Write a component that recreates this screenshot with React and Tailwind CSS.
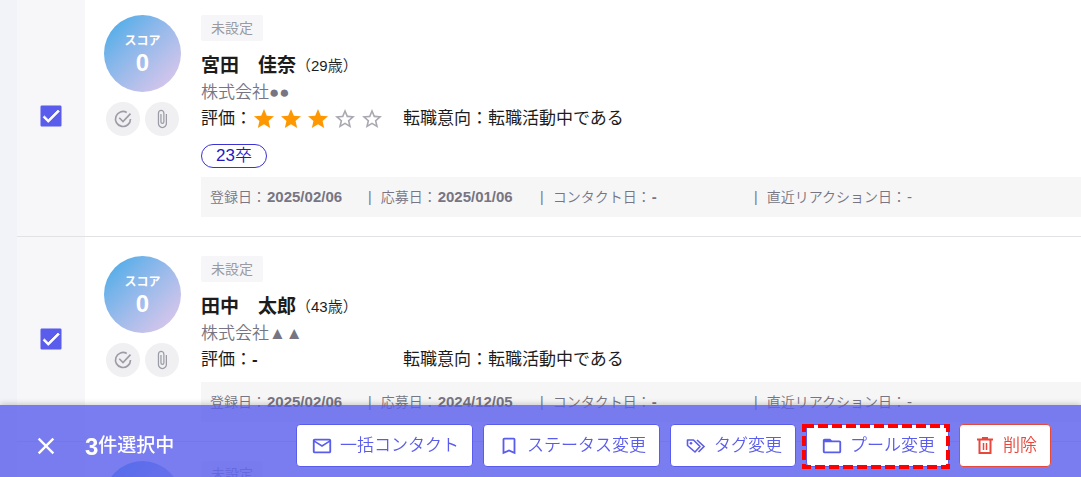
import React, { useState } from 'react';
import {
    MdCheck,
    MdClose,
    MdStar,
    MdStarBorder,
    MdMailOutline,
    MdBookmarkBorder,
    MdFolderOpen,
    MdAttachFile,
} from 'react-icons/md';

const candidates = [
    {
        id: 1,
        name: '宮田　佳奈',
        age: 29,
        company: '株式会社●●',
        rating: 3,
        intent: '転職活動中である',
        tag: '23卒',
        registered: '2025/02/06',
        applied: '2025/01/06',
    },
    {
        id: 2,
        name: '田中　太郎',
        age: 43,
        company: '株式会社▲▲',
        rating: 0,
        intent: '転職活動中である',
        registered: '2025/02/06',
        applied: '2024/12/05',
    },
    {
        id: 3,
        name: '佐藤　花子',
        age: 31,
        company: '株式会社■■',
        rating: 0,
        intent: '転職活動中である',
        registered: '2025/02/06',
        applied: '2024/12/05',
    },
];

function CheckCircleIcon() {
    return (
        <svg viewBox="0 0 24 24" className="h-5 w-5" fill="none" stroke="currentColor" strokeWidth="2">
            <path d="M16.5 4.2A9 9 0 1 0 21 12" />
            <path d="M7.5 10.500l4.500 4.500L21 5.500" />
        </svg>
    );
}

function TagsIcon() {
    return (
        <svg viewBox="0 0 22 22" className="h-[22px] w-[22px]" fill="none" stroke="currentColor" strokeWidth="1.6">
            <path d="M2.500 5h6l6.500 6.500-5 5.500-7.500-6.500z" strokeLinejoin="round" />
            <path d="M12 5l7 6.500-5.500 5.500" />
            <circle cx="6" cy="8.300" r="1.300" fill="currentColor" stroke="none" />
        </svg>
    );
}

function TrashIcon() {
    return (
        <svg viewBox="0 0 22 22" className="h-[22px] w-[22px]" fill="none" stroke="currentColor" strokeWidth="2">
            <path d="M3 4.500h16M8 3h6M5.500 5v13h11V5" />
            <path d="M9.500 8v7M12.500 8v7" strokeWidth="1.500" />
        </svg>
    );
}

function Rating({ value }) {
    if (value === 0) {
        return <span className="font-bold">-</span>;
    }
    return (
        <span className="flex gap-[3px]">
            {[1, 2, 3, 4, 5].map((n) =>
                n <= value ? (
                    <MdStar key={n} className="h-6 w-6 text-[#ff9800]" />
                ) : (
                    <MdStarBorder key={n} className="h-6 w-6 text-[#a9a9b2]" />
                )
            )}
        </span>
    );
}

function CandidateRow({ candidate }) {
    const [checked, setChecked] = useState(true);

    return (
        <li className="flex border-b border-[#e2e2e4]">
            <label className="flex w-[68px] shrink-0 items-center justify-center bg-[#f7f7fa]">
                <span className="relative flex h-[22px] w-[22px]">
                    <input
                        type="checkbox"
                        aria-label={candidate.name}
                        checked={checked}
                        onChange={() => setChecked(!checked)}
                        className="h-[22px] w-[22px] appearance-none rounded-xs border-2 border-[#5a5ceb] bg-white checked:bg-[#5a5ceb]"
                    />
                    {checked && (
                        <MdCheck className="pointer-events-none absolute inset-0 h-[22px] w-[22px] stroke-white stroke-1 text-white" />
                    )}
                </span>
            </label>

            <div className="flex min-w-0 flex-1 py-[19px] pl-[19px]">
                <div className="flex w-[77px] shrink-0 flex-col items-center">
                    <div className="flex h-[77px] w-[77px] flex-col items-center justify-center rounded-full bg-linear-135 from-[#4fade9] from-10% to-[#d8c6eb] to-90% pt-[2px] font-bold text-white">
                        <span className="text-[12px] leading-4">スコア</span>
                        <span className="text-[24px] leading-7">0</span>
                    </div>
                    <div className="mt-[10px] flex gap-[5px] text-[#9c9ca6]">
                        <button aria-label="対応済み" className="flex h-[34px] w-[34px] items-center justify-center rounded-full bg-[#f0f0f2]">
                            <CheckCircleIcon />
                        </button>
                        <button aria-label="添付ファイル" className="flex h-[34px] w-[34px] items-center justify-center rounded-full bg-[#f0f0f2]">
                            <MdAttachFile className="h-5 w-5" />
                        </button>
                    </div>
                </div>

                <div className="ml-5 min-w-0 flex-1">
                    <span className="block h-[26px] w-fit rounded-xs bg-[#f6f6f8] px-[10px] text-[14px] leading-[26px] font-normal text-[#9a9aa3]">
                        未設定
                    </span>
                    <div className="mt-[11px] flex h-7 items-center text-[#1c1c1c]">
                        <h2 className="text-[19px] font-bold">{candidate.name}</h2>
                        <span className="text-[15px]">（{candidate.age}歳）</span>
                    </div>
                    <p className="h-[26px] text-[17px] leading-[26px] text-[#777583]">{candidate.company}</p>
                    <div className="flex h-[26px] items-center text-[17px] font-normal text-[#1c1c1c]">
                        <div className="flex w-[202px] items-center">
                            評価：<Rating value={candidate.rating} />
                        </div>
                        <span>転職意向：{candidate.intent}</span>
                    </div>
                    {candidate.tag && (
                        <span className="mt-3 flex h-6 w-fit items-center rounded-full border border-[#3d32d2] px-[14px] text-[17px] text-[#2419c0]">
                            {candidate.tag}
                        </span>
                    )}
                    <dl className="mt-[9px] flex h-10 items-center overflow-hidden bg-[#f6f6f6] pl-[9px] text-[14px] whitespace-nowrap text-[#777583]">
                        <div className="flex w-[158px] items-center gap-px">
                            <dt>登録日：</dt>
                            <dd className="text-[15px] font-bold">{candidate.registered}</dd>
                        </div>
                        <div className="flex w-[172px] items-center gap-px">
                            <dt><span className="mr-[9px]">|</span>応募日：</dt>
                            <dd className="text-[15px] font-bold">{candidate.applied}</dd>
                        </div>
                        <div className="flex w-[214px] items-center gap-px">
                            <dt><span className="mr-[9px]">|</span>コンタクト日：</dt>
                            <dd className="text-[15px] font-bold">-</dd>
                        </div>
                        <div className="flex items-center gap-px">
                            <dt><span className="mr-[9px]">|</span>直近リアクション日：</dt>
                            <dd className="text-[15px]">-</dd>
                        </div>
                    </dl>
                </div>
            </div>
        </li>
    );
}

function ActionButton({ icon, danger, children }) {
    return (
        <button
            className={
                'flex h-[43px] items-center gap-[7px] rounded border bg-white pr-[13px] pl-[14px] text-[17px] whitespace-nowrap ' +
                (danger ? 'border-[#e8473c] text-[#e8473c]' : 'border-[#5a5ceb] text-[#5a5ceb]')
            }
        >
            {icon}
            {children}
        </button>
    );
}

function App() {
    return (
        <div className="h-screen overflow-hidden bg-[#f2f3f9] pl-[17px] font-['Liberation_Sans','Noto_Sans_CJK_JP',sans-serif]">
            <ul className="-mt-1 bg-white font-[350]">
                {candidates.map((candidate) => (
                    <CandidateRow key={candidate.id} candidate={candidate} />
                ))}
            </ul>

            <div className="fixed inset-x-0 bottom-0 flex h-[72px] items-center bg-[#595ceb]/80 pt-[9px] pr-[30px] pl-8 font-[350] shadow-[0_-1px_6px_rgba(0,0,0,0.2)]">
                <button aria-label="選択を解除" className="text-white">
                    <MdClose className="h-7 w-7" />
                </button>
                <p className="ml-[25px] flex items-center pt-[2px] text-[19px] font-medium text-white">
                    <span className="text-[24px] font-bold">3</span>件選択中
                </p>
                <div className="ml-auto flex gap-[10px]">
                    <ActionButton icon={<MdMailOutline className="h-[22px] w-[22px]" />}>一括コンタクト</ActionButton>
                    <ActionButton icon={<MdBookmarkBorder className="h-[22px] w-[22px]" />}>ステータス変更</ActionButton>
                    <ActionButton icon={<TagsIcon />}>タグ変更</ActionButton>
                    <div className="relative">
                        <ActionButton icon={<MdFolderOpen className="h-[22px] w-[22px]" />}>プール変更</ActionButton>
                        <div className="pointer-events-none absolute top-[2px] right-px bottom-0 -left-[2px]">
                            <svg className="block h-full w-full overflow-visible">
                                <rect width="100%" height="100%" fill="none" stroke="#ff0000" strokeWidth="4" strokeDasharray="10 4" />
                            </svg>
                        </div>
                    </div>
                    <ActionButton danger icon={<TrashIcon />}>削除</ActionButton>
                </div>
            </div>
        </div>
    );
}

export default App;
